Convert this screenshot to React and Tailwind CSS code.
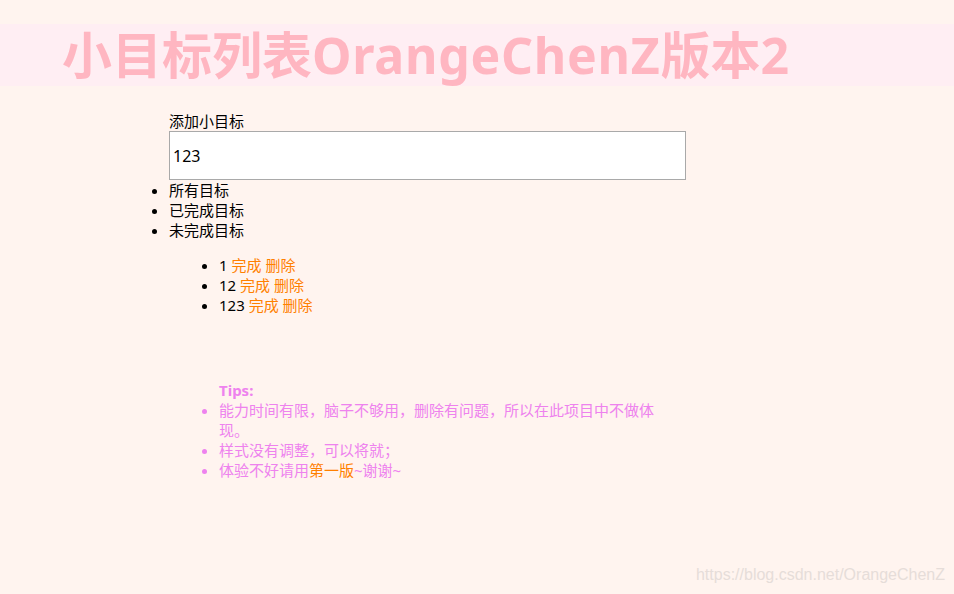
import { useState } from "react";

const font = "font-['Microsoft_YaHei','Noto_Sans','Noto_Sans_CJK_SC',sans-serif]";

export default function App() {
  const [text, setText] = useState("123");
  const todos = ["1", "12", "123"];

  return (
    <div className={`min-h-[594px] bg-[#fff4ef] text-[15px] leading-[20px] text-black ${font}`}>
      <div className="h-[24px]" />
      <div className="flex h-[62px] items-center bg-[#ffeef3] pl-[62px]">
        <h1 className="text-[50px] font-bold leading-none text-[#ffb6c1]">
          小目标列表<span className="tracking-[0.7px]">OrangeChenZ</span>版本2
        </h1>
      </div>

      <div className="pl-[169px] pt-[25px]">
        <label className="block">添加小目标</label>
        <input
          value={text}
          onChange={(e) => setText(e.target.value)}
          className="block h-[49px] w-[517px] border border-[#a9a9a9] bg-white px-[3px] text-[16px] outline-none"
        />
        <ul className="list-disc">
          <li>所有目标</li>
          <li>已完成目标</li>
          <li>未完成目标</li>
        </ul>

        <ul className="ml-[50px] mt-[15px] list-disc">
          {todos.map((t) => (
            <li key={t}>
              {t} <span className="text-[#ff8000]">完成</span> <span className="text-[#ff8000]">删除</span>
            </li>
          ))}
        </ul>

        <div className="ml-[50px] mt-[65px] w-[440px] text-[#ee82ee]">
          <p className="font-bold">Tips:</p>
          <ul className="list-disc marker:text-[#ee82ee]">
            <li>能力时间有限，脑子不够用，删除有问题，所以在此项目中不做体现。</li>
            <li>样式没有调整，可以将就；</li>
            <li>
              体验不好请用<span className="text-[#ff8000]">第一版</span>~谢谢~
            </li>
          </ul>
        </div>
      </div>

      <div className="flex justify-end pr-[9px] pt-[85px] font-['Liberation_Sans',sans-serif] text-[16px] text-[#e6ddd9]">
        https://blog.csdn.net/OrangeChenZ
      </div>
    </div>
  );
}
